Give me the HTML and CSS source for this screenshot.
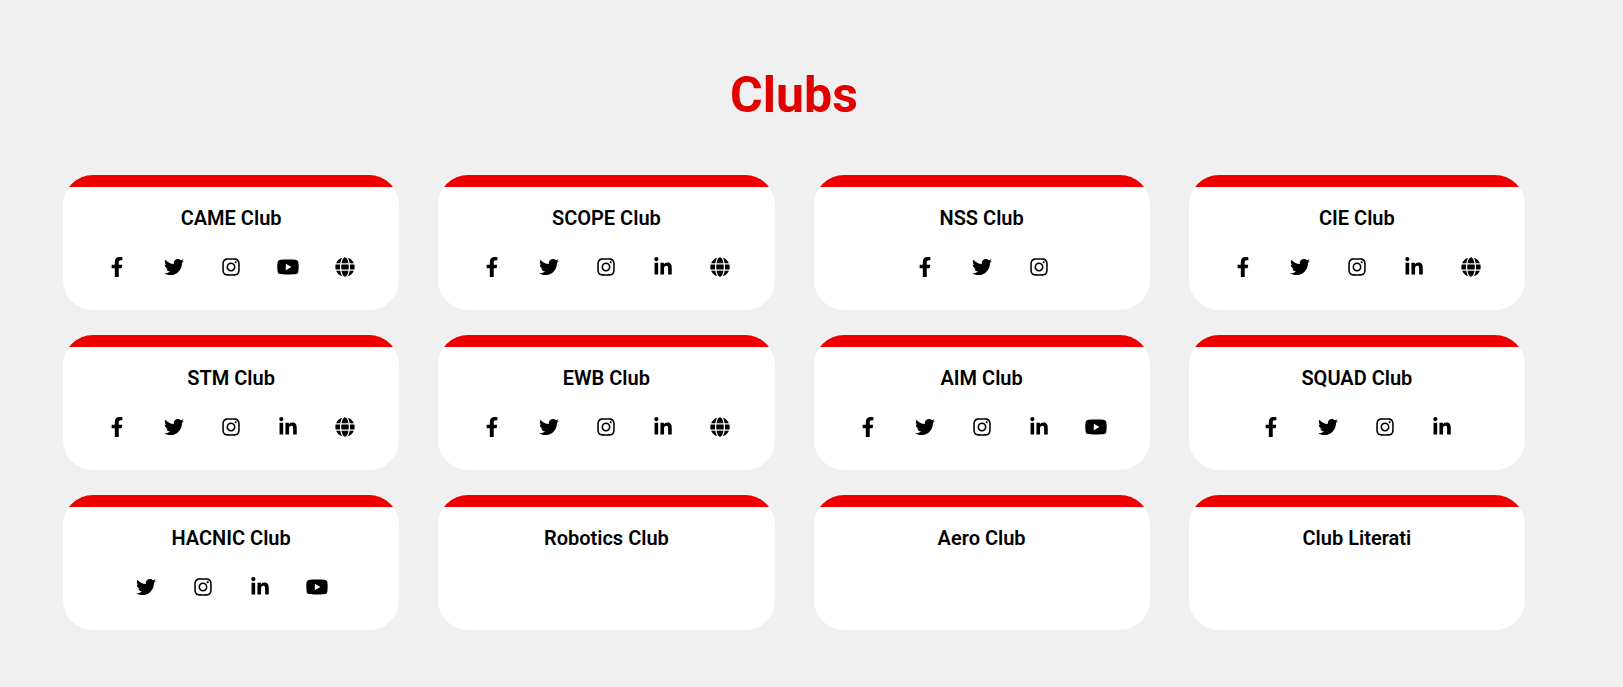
FILE: index.html
```html
<!DOCTYPE html>
<html lang="en">
<head>
<meta charset="utf-8">
<meta name="viewport" content="width=device-width, initial-scale=1">
<title>Clubs</title>
<link rel="stylesheet" href="styles.css">
</head>
<body>
<svg class="sprite" aria-hidden="true">
  <symbol id="facebook" viewBox="0 0 320 512"><path d="M279.14 288l14.22-92.66h-88.91v-60.13c0-25.35 12.42-50.06 52.24-50.06h40.42V6.26S260.43 0 225.36 0c-73.22 0-121.08 44.38-121.08 124.72v70.62H22.89V288h81.39v224h100.17V288z"/></symbol>
  <symbol id="twitter" viewBox="0 0 512 512"><path d="M459.37 151.716c.325 4.548.325 9.097.325 13.645 0 138.72-105.583 298.558-298.558 298.558-59.452 0-114.68-17.219-161.137-47.106 8.447.974 16.568 1.299 25.34 1.299 49.055 0 94.213-16.568 130.274-44.832-46.132-.975-84.792-31.188-98.112-72.772 6.498.974 12.995 1.624 19.818 1.624 9.421 0 18.843-1.3 27.614-3.573-48.081-9.747-84.143-51.98-84.143-102.985v-1.299c13.969 7.797 30.214 12.67 47.431 13.319-28.264-18.843-46.781-51.005-46.781-87.391 0-19.492 5.197-37.36 14.294-52.954 51.655 63.675 129.3 105.258 216.365 109.807-1.624-7.797-2.599-15.918-2.599-24.04 0-57.828 46.782-104.934 104.934-104.934 30.213 0 57.502 12.67 76.67 33.137 23.715-4.548 46.456-13.32 66.599-25.34-7.798 24.366-24.366 44.833-46.132 57.827 21.117-2.273 41.584-8.122 60.426-16.243-14.292 20.791-32.161 39.308-52.628 54.253z"/></symbol>
  <symbol id="instagram" viewBox="0 0 448 512"><path d="M224.1 141c-63.6 0-114.9 51.3-114.9 114.9s51.3 114.9 114.9 114.9S339 319.5 339 255.9 287.7 141 224.1 141zm0 189.6c-41.1 0-74.7-33.5-74.7-74.7s33.5-74.7 74.7-74.7 74.7 33.5 74.7 74.7-33.6 74.7-74.7 74.7zm146.4-194.3c0 14.9-12 26.8-26.8 26.8-14.9 0-26.8-12-26.8-26.8s12-26.8 26.8-26.8 26.8 12 26.8 26.8zm76.1 27.2c-1.7-35.9-9.9-67.7-36.2-93.9-26.2-26.2-58-34.4-93.9-36.2-37-2.1-147.9-2.1-184.9 0-35.8 1.7-67.6 9.9-93.9 36.1s-34.4 58-36.2 93.9c-2.1 37-2.1 147.9 0 184.9 1.7 35.9 9.9 67.7 36.2 93.9s58 34.4 93.9 36.2c37 2.1 147.9 2.1 184.9 0 35.9-1.7 67.7-9.9 93.9-36.2 26.2-26.2 34.4-58 36.2-93.9 2.1-37 2.1-147.8 0-184.8zM398.8 388c-7.8 19.6-22.9 34.7-42.6 42.6-29.5 11.7-99.5 9-132.1 9s-102.7 2.6-132.1-9c-19.6-7.8-34.7-22.9-42.6-42.6-11.7-29.5-9-99.5-9-132.1s-2.6-102.7 9-132.1c7.8-19.6 22.9-34.7 42.6-42.6 29.5-11.7 99.5-9 132.1-9s102.7-2.6 132.1 9c19.6 7.8 34.7 22.9 42.6 42.6 11.7 29.5 9 99.5 9 132.1s2.7 102.7-9 132.1z"/></symbol>
  <symbol id="youtube" viewBox="0 0 576 512"><path d="M549.655 124.083c-6.281-23.65-24.787-42.276-48.284-48.597C458.781 64 288 64 288 64S117.22 64 74.629 75.486c-23.497 6.322-42.003 24.947-48.284 48.597-11.412 42.867-11.412 132.305-11.412 132.305s0 89.438 11.412 132.305c6.281 23.65 24.787 41.5 48.284 47.821C117.22 448 288 448 288 448s170.78 0 213.371-11.486c23.497-6.321 42.003-24.171 48.284-47.821 11.412-42.867 11.412-132.305 11.412-132.305s0-89.438-11.412-132.305zm-317.51 213.508V175.185l142.739 81.205-142.739 81.201z"/></symbol>
  <symbol id="linkedin" viewBox="0 0 448 512"><path d="M100.28 448H7.4V148.9h92.88zM53.79 108.1C24.09 108.1 0 83.5 0 53.8a53.79 53.79 0 0 1 107.58 0c0 29.7-24.1 54.3-53.79 54.3zM447.9 448h-92.68V302.4c0-34.7-.7-79.2-48.29-79.2-48.29 0-55.69 37.7-55.69 76.7V448h-92.78V148.9h89.08v40.8h1.3c12.4-23.5 42.69-48.3 87.88-48.3 94 0 111.28 61.9 111.28 142.3V448z"/></symbol>
  <symbol id="globe" viewBox="0 0 496 512"><path d="M336.5 160C322 70.7 287.8 8 248 8s-74 62.7-88.5 152h177zM152 256c0 22.2 1.2 43.5 3.3 64h185.3c2.1-20.5 3.3-41.8 3.3-64s-1.2-43.5-3.3-64H155.3c-2.1 20.5-3.3 41.8-3.3 64zm324.7-96c-28.6-67.9-86.5-120.4-158-141.6 24.4 33.8 41.2 84.7 50 141.6h108zM177.2 18.4C105.8 39.6 47.8 92.1 19.3 160h108c8.7-56.9 25.5-107.8 49.9-141.6zM487.4 192H372.7c2.1 21 3.3 42.5 3.3 64s-1.2 43-3.3 64h114.6c5.5-20.5 8.6-41.8 8.6-64s-3.1-43.5-8.5-64zM120 256c0-21.5 1.2-43 3.3-64H8.6C3.2 212.5 0 233.8 0 256s3.2 43.5 8.6 64h114.6c-2-21-3.2-42.5-3.2-64zm39.5 96c14.5 89.3 48.7 152 88.5 152s74-62.7 88.5-152h-177zm159.3 141.6c71.4-21.2 129.4-73.7 158-141.6h-108c-8.8 56.9-25.6 107.8-50 141.6zM19.3 352c28.6 67.9 86.5 120.4 158 141.6-24.4-33.8-41.2-84.7-50-141.6h-108z"/></symbol>
</svg>
<main class="clubs">
  <h1 class="clubs-title">Clubs</h1>
  <div class="club-grid">
    <article class="club">
      <h2 class="club-name">CAME Club</h2>
      <nav class="links" aria-label="CAME Club">
        <a class="link" href="#" aria-label="Facebook"><svg class="icon"><use href="#facebook"/></svg></a>
        <a class="link" href="#" aria-label="Twitter"><svg class="icon"><use href="#twitter"/></svg></a>
        <a class="link" href="#" aria-label="Instagram"><svg class="icon"><use href="#instagram"/></svg></a>
        <a class="link" href="#" aria-label="YouTube"><svg class="icon"><use href="#youtube"/></svg></a>
        <a class="link" href="#" aria-label="Website"><svg class="icon"><use href="#globe"/></svg></a>
      </nav>
    </article>
    <article class="club">
      <h2 class="club-name">SCOPE Club</h2>
      <nav class="links" aria-label="SCOPE Club">
        <a class="link" href="#" aria-label="Facebook"><svg class="icon"><use href="#facebook"/></svg></a>
        <a class="link" href="#" aria-label="Twitter"><svg class="icon"><use href="#twitter"/></svg></a>
        <a class="link" href="#" aria-label="Instagram"><svg class="icon"><use href="#instagram"/></svg></a>
        <a class="link" href="#" aria-label="LinkedIn"><svg class="icon"><use href="#linkedin"/></svg></a>
        <a class="link" href="#" aria-label="Website"><svg class="icon"><use href="#globe"/></svg></a>
      </nav>
    </article>
    <article class="club">
      <h2 class="club-name">NSS Club</h2>
      <nav class="links" aria-label="NSS Club">
        <a class="link" href="#" aria-label="Facebook"><svg class="icon"><use href="#facebook"/></svg></a>
        <a class="link" href="#" aria-label="Twitter"><svg class="icon"><use href="#twitter"/></svg></a>
        <a class="link" href="#" aria-label="Instagram"><svg class="icon"><use href="#instagram"/></svg></a>
      </nav>
    </article>
    <article class="club">
      <h2 class="club-name">CIE Club</h2>
      <nav class="links" aria-label="CIE Club">
        <a class="link" href="#" aria-label="Facebook"><svg class="icon"><use href="#facebook"/></svg></a>
        <a class="link" href="#" aria-label="Twitter"><svg class="icon"><use href="#twitter"/></svg></a>
        <a class="link" href="#" aria-label="Instagram"><svg class="icon"><use href="#instagram"/></svg></a>
        <a class="link" href="#" aria-label="LinkedIn"><svg class="icon"><use href="#linkedin"/></svg></a>
        <a class="link" href="#" aria-label="Website"><svg class="icon"><use href="#globe"/></svg></a>
      </nav>
    </article>
    <article class="club">
      <h2 class="club-name">STM Club</h2>
      <nav class="links" aria-label="STM Club">
        <a class="link" href="#" aria-label="Facebook"><svg class="icon"><use href="#facebook"/></svg></a>
        <a class="link" href="#" aria-label="Twitter"><svg class="icon"><use href="#twitter"/></svg></a>
        <a class="link" href="#" aria-label="Instagram"><svg class="icon"><use href="#instagram"/></svg></a>
        <a class="link" href="#" aria-label="LinkedIn"><svg class="icon"><use href="#linkedin"/></svg></a>
        <a class="link" href="#" aria-label="Website"><svg class="icon"><use href="#globe"/></svg></a>
      </nav>
    </article>
    <article class="club">
      <h2 class="club-name">EWB Club</h2>
      <nav class="links" aria-label="EWB Club">
        <a class="link" href="#" aria-label="Facebook"><svg class="icon"><use href="#facebook"/></svg></a>
        <a class="link" href="#" aria-label="Twitter"><svg class="icon"><use href="#twitter"/></svg></a>
        <a class="link" href="#" aria-label="Instagram"><svg class="icon"><use href="#instagram"/></svg></a>
        <a class="link" href="#" aria-label="LinkedIn"><svg class="icon"><use href="#linkedin"/></svg></a>
        <a class="link" href="#" aria-label="Website"><svg class="icon"><use href="#globe"/></svg></a>
      </nav>
    </article>
    <article class="club">
      <h2 class="club-name">AIM Club</h2>
      <nav class="links" aria-label="AIM Club">
        <a class="link" href="#" aria-label="Facebook"><svg class="icon"><use href="#facebook"/></svg></a>
        <a class="link" href="#" aria-label="Twitter"><svg class="icon"><use href="#twitter"/></svg></a>
        <a class="link" href="#" aria-label="Instagram"><svg class="icon"><use href="#instagram"/></svg></a>
        <a class="link" href="#" aria-label="LinkedIn"><svg class="icon"><use href="#linkedin"/></svg></a>
        <a class="link" href="#" aria-label="YouTube"><svg class="icon"><use href="#youtube"/></svg></a>
      </nav>
    </article>
    <article class="club">
      <h2 class="club-name">SQUAD Club</h2>
      <nav class="links" aria-label="SQUAD Club">
        <a class="link" href="#" aria-label="Facebook"><svg class="icon"><use href="#facebook"/></svg></a>
        <a class="link" href="#" aria-label="Twitter"><svg class="icon"><use href="#twitter"/></svg></a>
        <a class="link" href="#" aria-label="Instagram"><svg class="icon"><use href="#instagram"/></svg></a>
        <a class="link" href="#" aria-label="LinkedIn"><svg class="icon"><use href="#linkedin"/></svg></a>
      </nav>
    </article>
    <article class="club">
      <h2 class="club-name">HACNIC Club</h2>
      <nav class="links" aria-label="HACNIC Club">
        <a class="link" href="#" aria-label="Twitter"><svg class="icon"><use href="#twitter"/></svg></a>
        <a class="link" href="#" aria-label="Instagram"><svg class="icon"><use href="#instagram"/></svg></a>
        <a class="link" href="#" aria-label="LinkedIn"><svg class="icon"><use href="#linkedin"/></svg></a>
        <a class="link" href="#" aria-label="YouTube"><svg class="icon"><use href="#youtube"/></svg></a>
      </nav>
    </article>
    <article class="club">
      <h2 class="club-name">Robotics Club</h2>
    </article>
    <article class="club">
      <h2 class="club-name">Aero Club</h2>
    </article>
    <article class="club">
      <h2 class="club-name">Club Literati</h2>
    </article>
  </div>
</main>
</body>
</html>
```
FILE: styles.css
```css
* {
  box-sizing: border-box;
}

body {
  margin: 0;
  background: #f0f0f0;
  color: #000;
  font-family: Roboto, "Liberation Sans", sans-serif;
}

.sprite {
  display: none;
}

.clubs {
  padding: 65px 98px 56px 63px;
}

.clubs-title {
  margin: 0 0 50px;
  color: #e00000;
  font-size: 50px;
  font-weight: 700;
  line-height: 60px;
  text-align: center;
}

.club-grid {
  display: grid;
  grid-template-columns: repeat(auto-fit, minmax(300px, 1fr));
  grid-auto-rows: 1fr;
  gap: 25px 39px;
}

.club {
  overflow: hidden;
  border-radius: 30px;
  background: #fff;
}

.club::before {
  content: "";
  display: block;
  height: 12px;
  background: #e00;
}

.club-name {
  margin: 19px 0 27px;
  font-size: 20px;
  font-weight: 600;
  line-height: 24px;
  text-align: center;
}

.links {
  display: flex;
  justify-content: center;
  padding-bottom: 33px;
}

.link {
  display: flex;
  justify-content: center;
  width: 57px;
  color: inherit;
}

.icon {
  width: 24px;
  height: 20px;
  fill: currentColor;
}
```
